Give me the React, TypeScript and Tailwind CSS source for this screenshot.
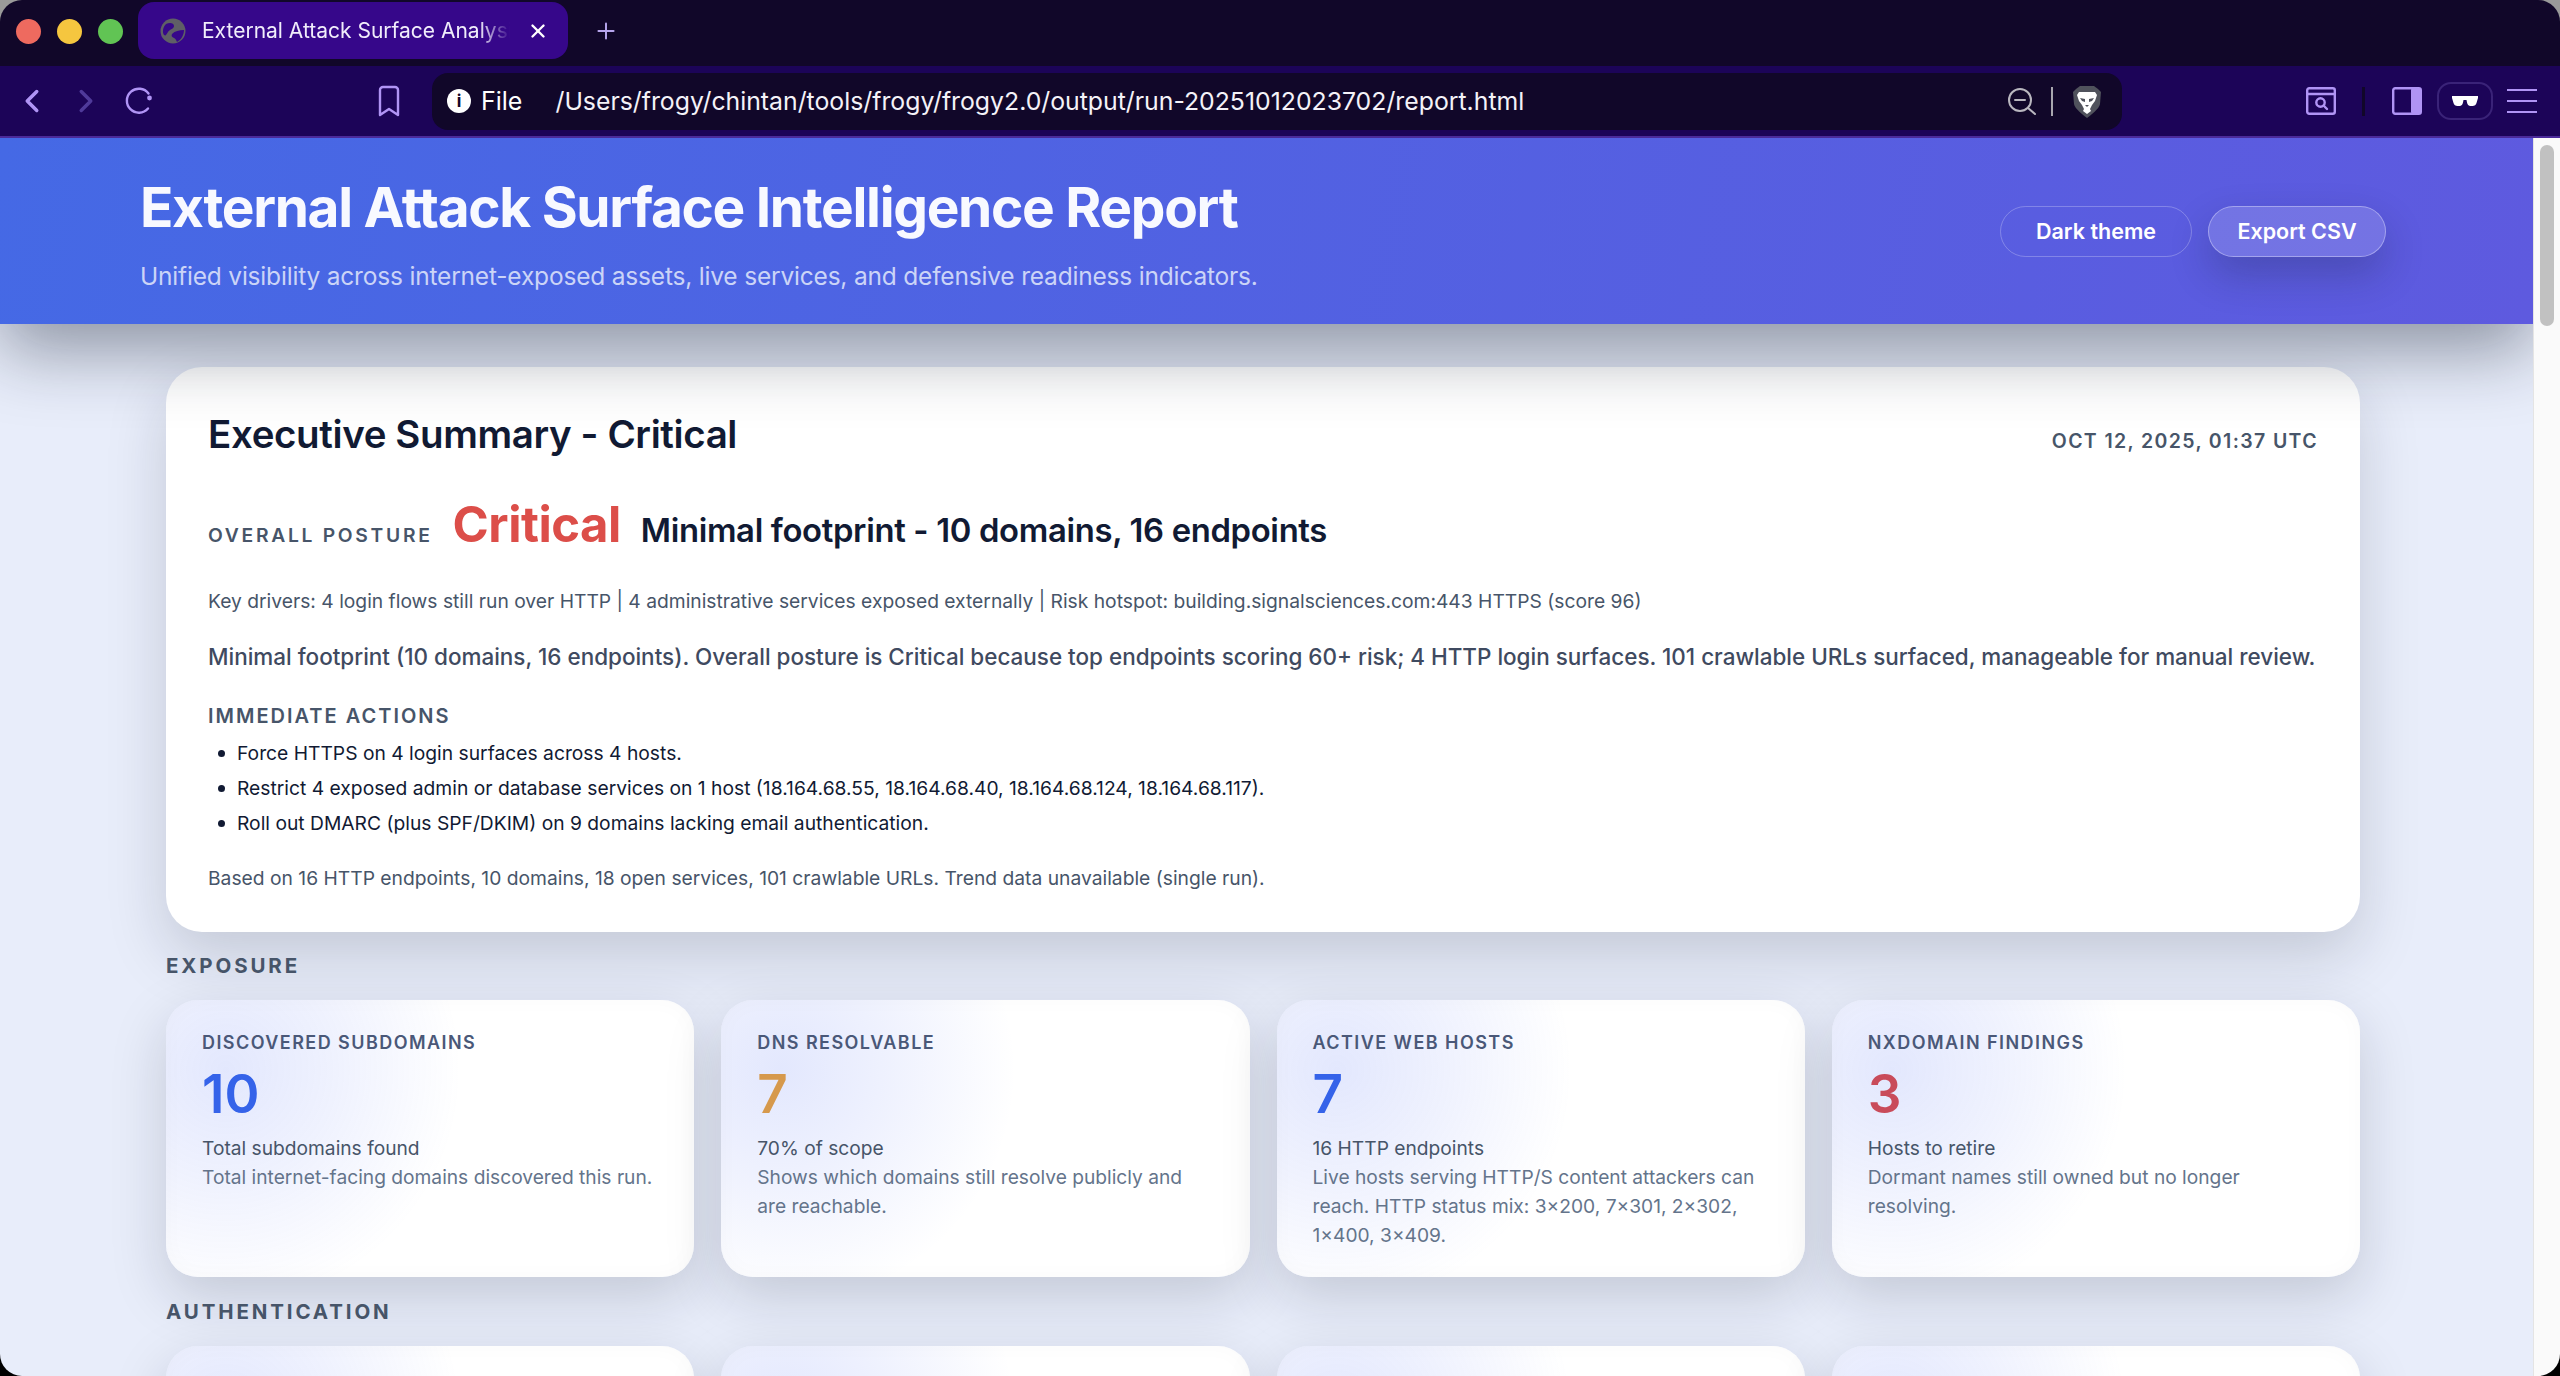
import React from "react";
import { ChevronLeft, ChevronRight, Plus, X } from "lucide-react";

interface Metric {
  label: string;
  value: string;
  color: string;
  sub: string;
  desc: string;
}

const exposure: Metric[] = [
  { label: "Discovered subdomains", value: "10", color: "text-[#3563e9]", sub: "Total subdomains found", desc: "Total internet-facing domains discovered this run." },
  { label: "DNS resolvable", value: "7", color: "text-[#d6994c]", sub: "70% of scope", desc: "Shows which domains still resolve publicly and are reachable." },
  { label: "Active web hosts", value: "7", color: "text-[#3563e9]", sub: "16 HTTP endpoints", desc: "Live hosts serving HTTP/S content attackers can reach. HTTP status mix: 3×200, 7×301, 2×302, 1×400, 3×409." },
  { label: "NXDOMAIN findings", value: "3", color: "text-[#c94b5a]", sub: "Hosts to retire", desc: "Dormant names still owned but no longer resolving." },
];

const actions = [
  "Force HTTPS on 4 login surfaces across 4 hosts.",
  "Restrict 4 exposed admin or database services on 1 host (18.164.68.55, 18.164.68.40, 18.164.68.124, 18.164.68.117).",
  "Roll out DMARC (plus SPF/DKIM) on 9 domains lacking email authentication.",
];

const cardBg =
  "bg-[radial-gradient(circle_at_60px_70px,rgba(79,109,245,0.16),rgba(79,109,245,0.09)_110px,rgba(255,255,255,0)_235px),linear-gradient(#ffffff,#ffffff)]";
const cardShadow = "shadow-[0_20px_55px_rgba(15,23,42,0.17),inset_0_0_22px_rgba(15,23,42,0.025)]";

// ---------------- Browser chrome ----------------
const Favicon = () => (
  <svg width="26" height="26" viewBox="0 0 26 26" className="shrink-0">
    <circle cx="13" cy="13" r="12.5" fill="#5f5f66" />
    <path d="M6 6c4-2 8-1 8 2s-4 3-6 6-2 4-4 3c-2-3-1-8 2-11Z" fill="#36078a" />
    <path d="M12 16c3-3 7-4 12-4 0 5-3 10-7 12-1-2-1-3-3-4s-3-2-2-4Z" fill="#36078a" />
  </svg>
);

const Reload = () => (
  <svg width="30" height="30" viewBox="0 0 30 30" fill="none" stroke="#b094f5" strokeWidth="2.4" strokeLinecap="round">
    <path d="M24 22.5A12 12 0 1 1 24.5 7.5" />
    <circle cx="25.5" cy="12" r="2.4" fill="#b094f5" stroke="none" />
  </svg>
);

const Bookmark = () => (
  <svg width="24" height="32" viewBox="0 0 24 32" fill="none" stroke="#b094f5" strokeWidth="2.4" strokeLinejoin="round">
    <path d="M3 5a3 3 0 0 1 3-3h12a3 3 0 0 1 3 3v25l-9-6-9 6Z" />
  </svg>
);

const ZoomOut = () => (
  <svg width="28" height="27" viewBox="0 0 28 27" fill="none" stroke="#b9b7bf" strokeWidth="2" strokeLinecap="round">
    <circle cx="12" cy="12" r="11" />
    <path d="M7 12h10M20 20l7 6" />
  </svg>
);

const BraveLion = () => (
  <svg width="28" height="33" viewBox="0 0 28 33">
    <path d="M7 1h14l4 3 3 3-1 12c-1 5-9 11-13 14C10 30 2 24 1 19L0 7l3-3Z" fill="#50525c" />
    <path d="M6 7h16l2 3-2 6-3 4-2 4 1 2-4 3-4-3 1-2-2-4-3-4-2-6Z" fill="#ffffff" />
    <path d="M7 13l5 1 0 3-3-1ZM21 13l-5 1 0 3 3-1ZM12 20h4l-2 2Z" fill="#50525c" />
  </svg>
);

const ScreenSearch = () => (
  <svg width="30" height="28" viewBox="0 0 30 28" fill="none" stroke="#b094f5" strokeWidth="2.4">
    <rect x="1.2" y="1.2" width="27.6" height="25.6" rx="2" />
    <path d="M1.2 7h27.6" />
    <circle cx="14.5" cy="15.5" r="4.2" />
    <path d="M17.5 18.5l3.5 3.5" strokeLinecap="round" />
  </svg>
);

const Sidebar = () => (
  <svg width="30" height="28" viewBox="0 0 30 28" fill="none">
    <rect x="1.2" y="1.2" width="27.6" height="25.6" rx="2" stroke="#b094f5" strokeWidth="2.4" />
    <rect x="19" y="1" width="10" height="26" rx="2" fill="#b094f5" />
  </svg>
);

const Glasses = () => (
  <svg width="26" height="10" viewBox="0 0 26 10" fill="#ffffff">
    <path d="M0 0h26v2l-1.500 5c-.5 2-2 3-4 3h-2c-2 0-3-1.500-3.500-3.500L14.500 4h-3L11 6.500C10.500 8.500 9.500 10 7.500 10h-2c-2 0-3.500-1-4-3L0 2Z" />
  </svg>
);

const InfoDot = () => (
  <div className="flex h-[24px] w-[24px] shrink-0 items-center justify-center rounded-full bg-white text-[17px] font-bold leading-none text-[#110729]">
    i
  </div>
);

const Hamburger = () => (
  <div className="flex w-[30px] flex-col gap-[9px]">
    <div className="h-[2px] bg-[#b094f5]" />
    <div className="h-[2px] bg-[#b094f5]" />
    <div className="h-[2px] bg-[#b094f5]" />
  </div>
);

const TabBar = () => (
  <div className="flex h-[66px] shrink-0 items-start bg-[#110729]">
    <div className="mt-[19px] ml-[16px] flex gap-[16px]">
      <div className="h-[25px] w-[25px] rounded-full bg-[#ee6a5f]" />
      <div className="h-[25px] w-[25px] rounded-full bg-[#f5c63f]" />
      <div className="h-[25px] w-[25px] rounded-full bg-[#61c454]" />
    </div>
    <div className="mt-[2px] ml-[15px] flex h-[57px] w-[430px] items-center rounded-[16px] bg-[#36078a] pl-[22px] pr-[19px]">
      <Favicon />
      <span className="ml-[16px] w-[308px] overflow-hidden whitespace-nowrap text-[21px] text-[#f1edfb] [mask-image:linear-gradient(to_right,#000_90%,transparent)]">
        External Attack Surface Analysis Report
      </span>
      <X size={22} strokeWidth={2.6} className="ml-auto text-white" />
    </div>
    <Plus size={26} strokeWidth={1.8} className="mt-[18px] ml-[25px] text-[#b8a6ee]" />
  </div>
);

const ToolBar = () => (
  <div className="flex h-[72px] shrink-0 items-center border-b-2 border-[#4b2a9a] bg-[#1c0458]">
    <ChevronLeft size={38} strokeWidth={2.2} className="ml-[13px] text-[#b094f5]" />
    <ChevronRight size={38} strokeWidth={2.2} className="ml-[16px] text-[#4f3a9a]" />
    <div className="ml-[19px]"><Reload /></div>
    <div className="ml-[223px]"><Bookmark /></div>
    <div className="ml-[31px] flex h-[57px] w-[1690px] items-center rounded-[16px] bg-[#110729] pl-[15px] pr-[21px]">
      <InfoDot />
      <span className="ml-[10px] pt-[2px] text-[25px] text-white">File</span>
      <span className="ml-[33px] whitespace-nowrap pt-[2px] text-[24.800px] text-[#f4f2f8]">
        /Users/frogy/chintan/tools/frogy/frogy2.0/output/run-20251012023702/report.html
      </span>
      <div className="ml-auto"><ZoomOut /></div>
      <div className="ml-[15px] h-[29px] w-[2px] bg-[#a8a6ae]" />
      <div className="ml-[20px]"><BraveLion /></div>
    </div>
    <div className="ml-[184px]"><ScreenSearch /></div>
    <div className="ml-[26px] h-[29px] w-[3px] bg-[#110729]" />
    <div className="ml-[27px]"><Sidebar /></div>
    <div className="ml-[15px] flex h-[38px] w-[56px] items-center justify-center rounded-[14px] border-2 border-[#3a2378]">
      <Glasses />
    </div>
    <div className="ml-[14px]"><Hamburger /></div>
  </div>
);

// ---------------- Report ----------------
const ReportHeader = () => (
  <header className="relative z-10 flex h-[186px] shrink-0 items-start justify-between bg-[linear-gradient(100deg,#4569e5,#5e5adf)] pr-[147px] pl-[140px] shadow-[0_26px_70px_rgba(15,23,42,0.42)]">
    <div>
      <h1 className="mt-[35px] text-[55px] leading-[68px] font-bold tracking-[-0.024em] text-[#f8f9ff]">
        External Attack Surface Intelligence Report
      </h1>
      <p className="mt-[17px] text-[24.500px] leading-[36px] tracking-[-0.19px] text-[#cbd4f7]">
        Unified visibility across internet-exposed assets, live services, and defensive readiness indicators.
      </p>
    </div>
    <div className="mt-[68px] flex gap-[16px]">
      <button className="h-[51px] w-[192px] rounded-full border border-white/25 text-[21.500px] font-semibold text-white">
        Dark theme
      </button>
      <button className="h-[51px] w-[178px] rounded-full border border-white/35 bg-white/15 text-[21.500px] font-semibold text-white shadow-[0_18px_40px_rgba(15,23,42,0.24)]">
        Export CSV
      </button>
    </div>
  </header>
);

const ExecutiveSummary = () => (
  <section className="rounded-[36px] bg-white px-[42px] pt-[42px] pb-[38px] shadow-[0_24px_60px_rgba(15,23,42,0.17)]">
    <div className="flex items-baseline justify-between">
      <h2 className="text-[38.500px] leading-[50px] font-semibold tracking-[-0.01em] text-[#111a33]">
        Executive Summary - Critical
      </h2>
      <span className="text-[19.500px] font-semibold tracking-[0.07em] text-[#475569]">
        OCT 12, 2025, 01:37 UTC
      </span>
    </div>
    <div className="mt-[31px] flex items-baseline">
      <span className="text-[19.300px] font-semibold tracking-[0.14em] text-[#475569]">OVERALL POSTURE</span>
      <span className="ml-[20px] text-[49px] leading-[70px] font-bold tracking-[-0.01em] text-[#dc4e49]">Critical</span>
      <span className="ml-[20px] text-[32.800px] font-semibold tracking-[-0.01em] text-[#111a33]">
        Minimal footprint - 10 domains, 16 endpoints
      </span>
    </div>
    <p className="mt-[25px] text-[19.250px] leading-[32px] text-[#475569]">
      Key drivers: 4 login flows still run over HTTP | 4 administrative services exposed externally | Risk hotspot: building.signalsciences.com:443 HTTPS (score 96)
    </p>
    <p className="mt-[22px] whitespace-nowrap text-[22.460px] leading-[36px] font-medium text-[#3f4a60]">
      Minimal footprint (10 domains, 16 endpoints). Overall posture is Critical because top endpoints scoring 60+ risk; 4 HTTP login surfaces. 101 crawlable URLs surfaced, manageable for manual review.
    </p>
    <h3 className="mt-[26px] text-[20px] leading-[30px] font-semibold tracking-[0.1em] text-[#475569]">
      IMMEDIATE ACTIONS
    </h3>
    <ul className="mt-[5px]">
      {actions.map((action) => (
        <li key={action} className="flex h-[35px] items-center text-[19.250px] text-[#111a33]">
          <span className="mr-[12px] ml-[10px] h-[7px] w-[7px] shrink-0 rounded-full bg-[#111a33]" />
          {action}
        </li>
      ))}
    </ul>
    <p className="mt-[21px] text-[19.250px] leading-[32px] text-[#475569]">
      Based on 16 HTTP endpoints, 10 domains, 18 open services, 101 crawlable URLs. Trend data unavailable (single run).
    </p>
  </section>
);

const MetricCard = ({ metric }: { metric: Metric }) => (
  <div className={`h-[277px] rounded-[32px] px-[36px] pt-[30px] ${cardShadow} ${cardBg}`}>
    <div className="text-[18px] leading-[26px] font-semibold tracking-[0.08em] text-[#4a5878] uppercase">
      {metric.label}
    </div>
    <div className={`mt-[6px] text-[53px] leading-[64px] font-semibold ${metric.color}`}>{metric.value}</div>
    <div className="mt-[8px] text-[19.200px] leading-[29px] text-[#475569]">{metric.sub}</div>
    <div className="text-[19.200px] leading-[29px] text-[#64748b]">{metric.desc}</div>
  </div>
);

const SectionLabel = ({ children }: { children: React.ReactNode }) => (
  <h3 className="text-[20.500px] leading-[28px] font-bold tracking-[0.14em] text-[#475569]">{children}</h3>
);

const emptyCards = [1, 2, 3, 4];

export default function App() {
  return (
    <div
      className="h-[1376px] w-[2560px] overflow-hidden bg-[linear-gradient(#9a9a9a_50%,#000000_50%)] font-['Inter',sans-serif]"
    >
      <div className="flex h-full flex-col overflow-hidden rounded-[22px]">
        <TabBar />
        <ToolBar />
        <div className="flex min-h-0 flex-1">
          <main className="flex min-w-0 flex-1 flex-col overflow-hidden bg-[#e8edfa]">
            <ReportHeader />
            <div className="pt-[43px] pr-[173px] pl-[166px]">
              <ExecutiveSummary />
              <div className="mt-[20px]"><SectionLabel>EXPOSURE</SectionLabel></div>
              <div className="mt-[20px] grid grid-cols-4 gap-[27px]">
                {exposure.map((metric) => (
                  <MetricCard key={metric.label} metric={metric} />
                ))}
              </div>
              <div className="mt-[21px]"><SectionLabel>AUTHENTICATION</SectionLabel></div>
              <div className="mt-[20px] grid grid-cols-4 gap-[27px]">
                {emptyCards.map((n) => (
                  <div key={n} className={`h-[277px] rounded-[32px] ${cardShadow} ${cardBg}`} />
                ))}
              </div>
            </div>
          </main>
          {/* scrollbar */}
          <div className="w-[27px] shrink-0 border-l border-[#e4e4e4] bg-[#fafafa] pt-[7px] pl-[6px]">
            <div className="h-[181px] w-[14px] rounded-full bg-[#c1c1c1]" />
          </div>
        </div>
      </div>
    </div>
  );
}
